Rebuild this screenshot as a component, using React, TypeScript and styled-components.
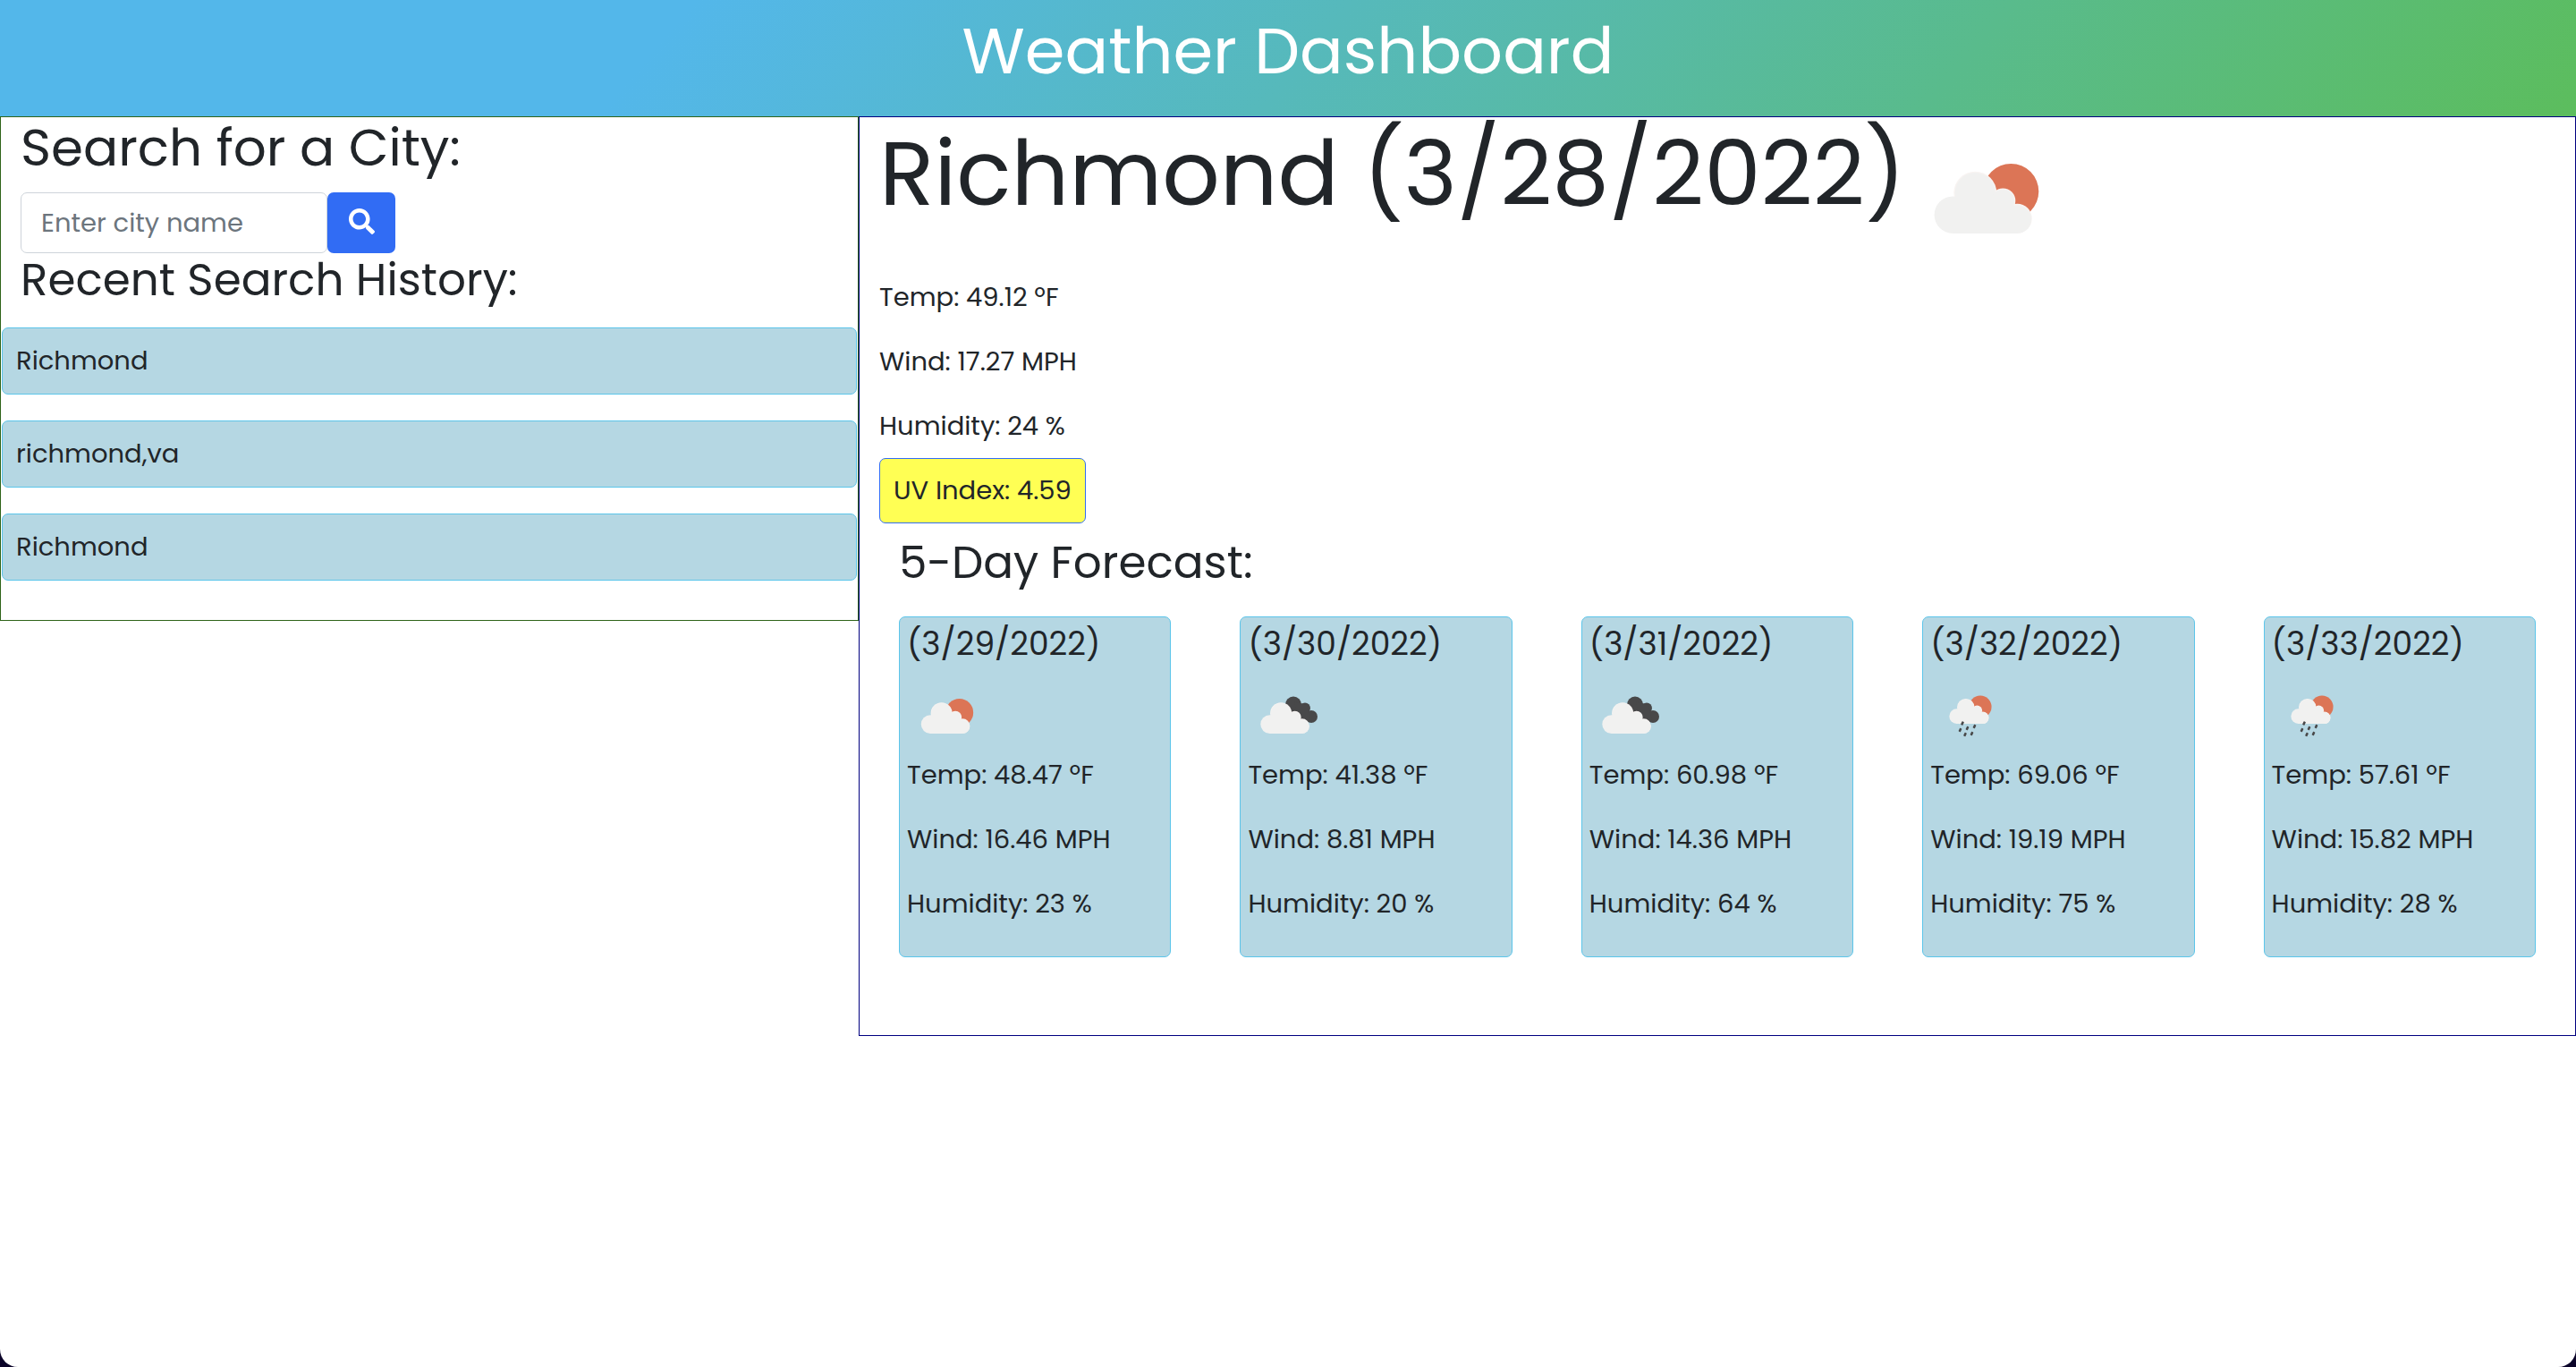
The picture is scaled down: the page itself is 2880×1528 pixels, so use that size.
import React from "react";
import styled, { createGlobalStyle } from "styled-components";
import { FaSearch } from "react-icons/fa";

const GlobalStyle = createGlobalStyle`
  *, *::before, *::after { box-sizing: border-box; }
  body {
    margin: 0;
    background: #0b0429;
    color: #212529;
    font-family: Poppins, Inter, "Open Sans", sans-serif;
    font-size: 29px;
    line-height: 43px;
  }
  h1, h2, h3, h4, p, ul { margin: 0; padding: 0; font-weight: 400; }
  button, input { font: inherit; color: inherit; }
`;

const Page = styled.div`
  min-height: 100vh;
  background: #fff;
  border-radius: 0 0 20px 20px;
`;

const Header = styled.header`
  height: 130px;
  padding-top: 14px;
  background: linear-gradient(130deg, #53b7ea 26%, #5cbd5d 100%);
  color: #fff;
  text-align: center;
`;

const PageTitle = styled.h1`
  font-size: 72px;
  line-height: 86px;
`;

const Columns = styled.main`
  display: grid;
  grid-template-columns: 1fr 2fr;
  align-items: start;
`;

const Sidebar = styled.aside`
  border: 1px solid #2f6419;
  padding-bottom: 15px;
`;

const SearchForm = styled.form`
  padding: 0 22px;
`;

const SearchTitle = styled.h2`
  font-size: 58px;
  line-height: 67px;
  padding-bottom: 17px;
`;

const SearchLabel = styled.label`
  display: block;
`;

const SearchRow = styled.div`
  display: flex;
  height: 68px;
`;

const CityInput = styled.input`
  width: 343px;
  padding: 0 22px;
  background: #fff;
  border: 1px solid #ced4da;
  border-radius: 7px;
  &::placeholder { color: #6c757d; opacity: 1; }
`;

const SearchButton = styled.button`
  display: flex;
  align-items: center;
  justify-content: center;
  width: 76px;
  padding: 0 0 4px;
  border: 0;
  border-radius: 7px;
  background: #316cf4;
  color: #fff;
`;

const SectionTitle = styled.h3`
  padding: 0 22px;
  font-size: 50px;
  line-height: 60px;
`;

const History = styled.ul`
  display: grid;
  list-style: none;
  padding: 23px 1px 0;
`;

const HistoryItem = styled.li`
  margin-bottom: 29px;
  padding: 15px;
  border: 1px solid #5bc5ea;
  border-radius: 7px;
  background: #b5d7e3;
`;

const Details = styled.section`
  border: 1px solid #000080;
  padding-bottom: 87px;
`;

const Current = styled.div`
  display: flex;
  flex-direction: column;
  align-items: flex-start;
  padding: 0 22px;
`;

const CityTitle = styled.h2`
  display: flex;
  align-items: flex-start;
  height: 180px;
  font-size: 101px;
  line-height: 126px;
`;

const Reading = styled.p`
  margin-bottom: 29px;
  white-space: nowrap;
`;

const Readings = styled.div`
  & > p:last-child { margin-bottom: 14px; }
`;

const UvBadge = styled.p`
  padding: 14px 15px;
  border: 1px solid #316cf4;
  border-radius: 7px;
  background: #ffff54;
`;

const Forecast = styled.div`
  padding: 15px 44px 0;
`;

const ForecastTitle = styled.h3`
  font-size: 50px;
  line-height: 58px;
  padding-bottom: 31px;
`;

const Cards = styled.div`
  display: grid;
  grid-template-columns: repeat(5, minmax(0, 1fr));
  column-gap: 77px;
`;

const Card = styled.article`
  padding: 8px;
  border: 1px solid #5bc5ea;
  border-radius: 7px;
  background: #b5d7e3;
`;

const CardDate = styled.h4`
  font-size: 36px;
  line-height: 43px;
  padding-bottom: 14px;
`;

const Glyph = styled.svg<{ $size: number }>`
  display: block;
  flex: none;
  width: ${(p) => p.$size}px;
  height: ${(p) => p.$size}px;
`;

type Kind = "sun" | "clouds" | "rain";

const Cloud = () => (
  <g fill="#f1f1f0">
    <circle cx="52.3" cy="110.2" r="20.7" />
    <circle cx="77.3" cy="85.7" r="22.7" />
    <circle cx="108.3" cy="94.5" r="12.7" />
    <circle cx="124.3" cy="115.2" r="15.7" />
    <path d="M52 131V92L60 88H112L124 104V131Z" />
  </g>
);

const CloudEdge = () => (
  <g fill="#f8f4f2">
    <circle cx="77.3" cy="85.7" r="24" />
    <circle cx="108.3" cy="94.5" r="14" />
    <circle cx="124.3" cy="114.2" r="16.5" />
  </g>
);

const WeatherIcon = ({ kind, size }: { kind: Kind; size: number }) => (
  <Glyph $size={size} viewBox="0 1 180 180" role="img" aria-label={kind}>
    {kind === "clouds" ? (
      <>
        <g fill="#484849">
          <circle cx="102" cy="66" r="18" />
          <circle cx="128" cy="74" r="12" />
          <circle cx="142" cy="93" r="14" />
          <path d="M104 60L132 66L140 104L112 100Z" />
        </g>
        <g transform="translate(-3 0)">
          <CloudEdge />
          <Cloud />
        </g>
      </>
    ) : (
      <g transform={kind === "rain" ? "translate(17 3) scale(.81)" : undefined}>
        <circle cx="117.3" cy="84" r="31" fill="#dc7556" />
        <CloudEdge />
        <Cloud />
      </g>
    )}
    {kind === "rain" && (
      <g fill="#484849">
        {[[72, 108], [67, 123], [83, 119], [99, 115], [78, 133], [93, 131]].map(([x, y]) => (
          <rect key={x} x={x - 2.5} y={y - 4} width="5" height="8" rx="1" transform={`rotate(25 ${x} ${y})`} />
        ))}
      </g>
    )}
  </Glyph>
);

const history = ["Richmond", "richmond,va", "Richmond"];

const days: { date: string; kind: Kind; temp: string; wind: string; humidity: number }[] = [
  { date: "3/29/2022", kind: "sun", temp: "48.47", wind: "16.46", humidity: 23 },
  { date: "3/30/2022", kind: "clouds", temp: "41.38", wind: "8.81", humidity: 20 },
  { date: "3/31/2022", kind: "clouds", temp: "60.98", wind: "14.36", humidity: 64 },
  { date: "3/32/2022", kind: "rain", temp: "69.06", wind: "19.19", humidity: 75 },
  { date: "3/33/2022", kind: "rain", temp: "57.61", wind: "15.82", humidity: 28 },
];

export default function App() {
  return (
    <>
      <GlobalStyle />
      <Page>
        <Header>
          <PageTitle>Weather Dashboard</PageTitle>
        </Header>
        <Columns>
          <Sidebar>
            <SearchForm onSubmit={(e) => e.preventDefault()}>
              <SearchTitle>
                <SearchLabel htmlFor="city">Search for a City:</SearchLabel>
              </SearchTitle>
              <SearchRow>
                <CityInput id="city" type="text" placeholder="Enter city name" />
                <SearchButton type="submit" aria-label="Search">
                  <FaSearch size={29} />
                </SearchButton>
              </SearchRow>
            </SearchForm>
            <SectionTitle>Recent Search History:</SectionTitle>
            <History>
              {history.map((city, i) => (
                <HistoryItem key={i}>{city}</HistoryItem>
              ))}
            </History>
          </Sidebar>
          <Details>
            <Current>
              <CityTitle>
                Richmond (3/28/2022)
                <WeatherIcon kind="sun" size={180} />
              </CityTitle>
              <Readings>
                <Reading>Temp: 49.12 ºF</Reading>
                <Reading>Wind: 17.27 MPH</Reading>
                <Reading>Humidity: 24 %</Reading>
              </Readings>
              <UvBadge>UV Index: 4.59</UvBadge>
            </Current>
            <Forecast>
              <ForecastTitle>5-Day Forecast:</ForecastTitle>
              <Cards>
                {days.map((d) => (
                  <Card key={d.date}>
                    <CardDate>({d.date})</CardDate>
                    <WeatherIcon kind={d.kind} size={90} />
                    <Reading>Temp: {d.temp} ºF</Reading>
                    <Reading>Wind: {d.wind} MPH</Reading>
                    <Reading>Humidity: {d.humidity} %</Reading>
                  </Card>
                ))}
              </Cards>
            </Forecast>
          </Details>
        </Columns>
      </Page>
    </>
  );
}
